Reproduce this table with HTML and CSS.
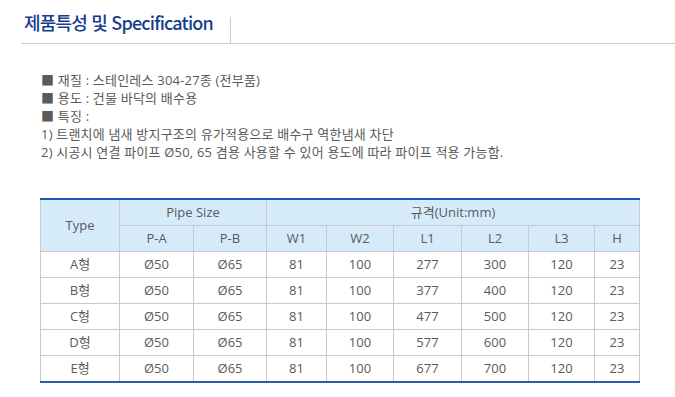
FILE: index.html
```html
<!DOCTYPE html>
<html lang="ko">
<head>
<meta charset="utf-8">
<link rel="stylesheet" href="styles.css">
</head>
<body>
<div class="head">
  <div class="title-box"><h2 class="title">제품특성 및 Specification</h2></div>
</div>
<ul class="spec">
  <li>■ 재질 : 스테인레스 304-27종 (전부품)</li>
  <li>■ 용도 : 건물 바닥의 배수용</li>
  <li>■ 특징 :</li>
  <li>1) 트랜치에 냄새 방지구조의 유가적용으로 배수구 역한냄새 차단</li>
  <li>2) 시공시 연결 파이프 Ø50, 65 겸용 사용할 수 있어 용도에 따라 파이프 적용 가능함.</li>
</ul>
<table class="tbl">
  <colgroup>
    <col style="width:79px"><col style="width:74px"><col style="width:73px"><col style="width:60px"><col style="width:67px"><col style="width:68px"><col style="width:67px"><col style="width:66px"><col style="width:45px">
  </colgroup>
  <thead>
    <tr><th rowspan="2">Type</th><th colspan="2">Pipe Size</th><th colspan="6">규격(Unit:mm)</th></tr>
    <tr><th>P-A</th><th>P-B</th><th>W1</th><th>W2</th><th>L1</th><th>L2</th><th>L3</th><th>H</th></tr>
  </thead>
  <tbody>
    <tr><td>A형</td><td>Ø50</td><td>Ø65</td><td>81</td><td>100</td><td>277</td><td>300</td><td>120</td><td>23</td></tr>
    <tr><td>B형</td><td>Ø50</td><td>Ø65</td><td>81</td><td>100</td><td>377</td><td>400</td><td>120</td><td>23</td></tr>
    <tr><td>C형</td><td>Ø50</td><td>Ø65</td><td>81</td><td>100</td><td>477</td><td>500</td><td>120</td><td>23</td></tr>
    <tr><td>D형</td><td>Ø50</td><td>Ø65</td><td>81</td><td>100</td><td>577</td><td>600</td><td>120</td><td>23</td></tr>
    <tr><td>E형</td><td>Ø50</td><td>Ø65</td><td>81</td><td>100</td><td>677</td><td>700</td><td>120</td><td>23</td></tr>
  </tbody>
</table>
</body>
</html>
```
FILE: styles.css
```css
html, body { margin: 0; padding: 0; background: #fff; }
body { font-family: "Open Sans", "Noto Sans CJK KR", sans-serif; color: #555; }
.head {
  margin-left: 21px;
  height: 43px;
  border-bottom: 1px solid #cccccc;
  display: flex;
  align-items: flex-end;
}
.title-box {
  width: 209px;
  height: 26px;
  border-right: 1px solid #cccccc;
  position: relative;
}
.title {
  margin: 0;
  position: absolute;
  left: 3px;
  bottom: 9px;
  font-family: "Noto Sans CJK KR", "Noto Sans", sans-serif;
  font-size: 18px;
  font-weight: 500;
  line-height: 24px;
  letter-spacing: -0.8px;
  color: #173c8e;
  white-space: nowrap;
}
.spec {
  list-style: none;
  margin: 27px 0 0 41px;
  padding: 0;
  font-size: 13px;
  font-weight: 400;
  line-height: 18px;
  letter-spacing: 0.2px;
  color: #5a5a5a;
}
.tbl {
  margin: 37px 0 0 40px;
  width: 600px;
  table-layout: fixed;
  border-collapse: collapse;
  border-top: 2px solid #1b55b4;
  border-bottom: 2px solid #2a5aa8;
  font-size: 13px;
  color: #5a5a5a;
}
.tbl th, .tbl td {
  border: 1px solid #c9c9c9;
  height: 25px;
  padding: 0;
  text-align: center;
  font-weight: 400;
  line-height: 25px;
}
.tbl th { background: #d6ebfa; }
.tbl tr:first-child th { border-top: none; }
.tbl tbody tr:last-child td { border-bottom: none; }
```
